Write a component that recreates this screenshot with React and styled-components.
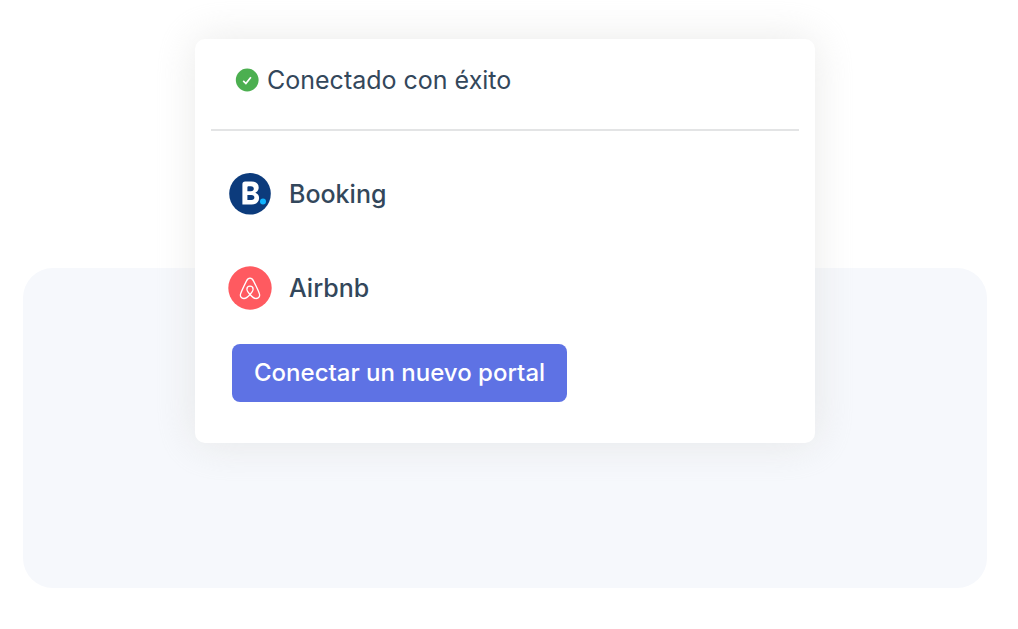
import React from "react";
import styled, { createGlobalStyle } from "styled-components";

const portals = [
  { name: "Booking", Logo: BookingLogo },
  { name: "Airbnb", Logo: AirbnbLogo },
];

const App = () => {
  return (
    <>
      <GlobalStyle />
      <Stage>
        <Backdrop />
        <Card>
          <CardHeader>
            <CheckIcon />
            <Title>Conectado con éxito</Title>
          </CardHeader>
          <PortalList>
            {portals.map(({ name, Logo }) => (
              <Portal key={name}>
                <Logo />
                <span>{name}</span>
              </Portal>
            ))}
          </PortalList>
          <ConnectButton type="button">Conectar un nuevo portal</ConnectButton>
        </Card>
      </Stage>
    </>
  );
};

function CheckIcon() {
  return (
    <svg width="24" height="24" viewBox="0 0 24 24" aria-hidden="true">
      <circle cx="12.2" cy="12" r="11.4" fill="#4caf50" />
      <path
        d="M8.2 12.8l2.7 2.7 5-6.3"
        fill="none"
        stroke="#fff"
        strokeWidth="1.7"
      />
    </svg>
  );
}

function BookingLogo() {
  return (
    <svg width="44" height="44" viewBox="0 0 44 44" aria-hidden="true">
      <circle cx="22" cy="21.8" r="20.8" fill="#0c3b7c" />
      <path
        fill="#fff"
        fillRule="evenodd"
        d="M14.4 12.4q0-2.8 2.8-2.8h6.4c4.4 0 7.1 2.2 7.1 5.9 0 2.2-1 3.8-2.7 4.8l-.7.4.6.3c2.2 1 3.2 2.7 3.2 5 0 4.2-3 6.4-7.5 6.4H14.4zM19.4 19.2h3.4c2 0 3-.9 3-2.5s-.9-2.5-2.9-2.5h-2.1c-1 0-1.4.4-1.4 1.4zM19.4 28h4c2 0 3-.9 3-2.5s-1-2.5-3-2.5h-4z"
      />
      <circle cx="35" cy="29.4" r="3" fill="#10b4ff" />
    </svg>
  );
}

function AirbnbLogo() {
  return (
    <svg width="44" height="44" viewBox="0 0 44 44" aria-hidden="true">
      <circle cx="22" cy="22" r="21.7" fill="#ff5a60" />
      <path
        d="M22 28.5c-2.2-2.5-3.1-4-3.1-5.3 0-1.9 1.3-3.1 3.1-3.1s3.1 1.2 3.1 3.1c0 1.3-.9 2.8-3.1 5.3zc-2.2 2.6-4.2 4-6.1 4-2.5 0-4.1-2.1-3.3-4.6.7-2.2 4.6-10.4 5.8-12.8.9-1.9 1.9-2.9 3.6-2.9s2.7 1 3.6 2.9c1.2 2.4 5.1 10.6 5.8 12.8.8 2.5-.8 4.6-3.3 4.6-1.9 0-3.9-1.4-6.1-4z"
        fill="none"
        stroke="#fff"
        strokeWidth="1.3"
        strokeLinejoin="round"
      />
    </svg>
  );
}

const GlobalStyle = createGlobalStyle`
  * {
    box-sizing: border-box;
  }

  body {
    margin: 0;
    background: #fff;
    color: #33475b;
    font-family: Inter, "Open Sans", sans-serif;
    font-size: 25px;
    line-height: 34px;
  }
`;

const Stage = styled.main`
  display: grid;
  padding: 39px 31px 41px 23px;
`;

const Backdrop = styled.div`
  grid-area: 1 / 1;
  min-height: 320px;
  margin-top: 229px;
  border-radius: 30px;
  background: #f6f8fc;
`;

const Card = styled.section`
  grid-area: 1 / 1;
  place-self: start center;
  width: 100%;
  max-width: 620px;
  padding: 0 16px 41px;
  border-radius: 10px;
  background: #fff;
  box-shadow: 0 0 40px rgba(220, 220, 218, 0.6);
`;

const CardHeader = styled.header`
  display: flex;
  align-items: center;
  gap: 8px;
  padding: 24px 24px 32px;
  border-bottom: 2px solid #e3e4e5;
`;

const Title = styled.h1`
  margin: 0;
  font-size: 25px;
  font-weight: 400;
`;

const PortalList = styled.ul`
  display: grid;
  gap: 50px;
  margin: 0;
  padding: 41px 17px 34px;
  list-style: none;
`;

const Portal = styled.li`
  display: flex;
  align-items: center;
  gap: 17px;
  font-weight: 500;
`;

const ConnectButton = styled.button`
  margin-left: 21px;
  padding: 12px 22px;
  border: 0;
  border-radius: 8px;
  background: #5e72e4;
  color: #fff;
  font: inherit;
  font-size: 24px;
  font-weight: 500;
  cursor: pointer;
`;

export default App;
